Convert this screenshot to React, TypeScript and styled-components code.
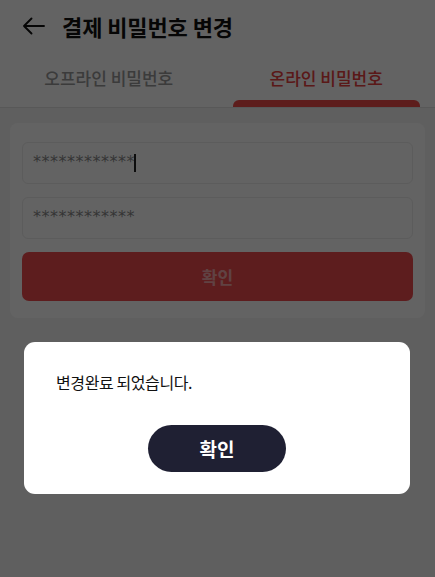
import React, {useState} from 'react'
import styled, {createGlobalStyle} from 'styled-components'

const GlobalStyle = createGlobalStyle`
  body {
    margin: 0;
    font-family: 'Noto Sans CJK KR', 'Noto Sans', sans-serif;
    background: #f4f4f4;
  }
  * {
    box-sizing: border-box;
  }
`

type TabKey = 'offline' | 'online'

const tabs: {key: TabKey; label: string}[] = [
  {key: 'offline', label: '오프라인 비밀번호'},
  {key: 'online', label: '온라인 비밀번호'},
]

const BackIcon = () => (
  <svg width="23" height="18" viewBox="0 0 23 18" fill="none">
    <path d="M22 9H2M9.5 1.5L2 9l7.5 7.5" stroke="#111" strokeWidth="1.9" strokeLinecap="round" strokeLinejoin="round" />
  </svg>
)

export default function App() {
  const [activeTab, setActiveTab] = useState<TabKey>('online')
  const [isModalShown, setIsModalShown] = useState<boolean>(true)

  return (
    <Page>
      <GlobalStyle />
      <Header>
        <BackButton>
          <BackIcon />
        </BackButton>
        <Title>결제 비밀번호 변경</Title>
      </Header>

      <Tabs>
        {tabs.map((tab) => (
          <Tab key={tab.key} active={tab.key === activeTab} onClick={() => setActiveTab(tab.key)}>
            {tab.label}
          </Tab>
        ))}
      </Tabs>

      <Content>
        <Card>
          <Field>
            ************
            <Caret />
          </Field>
          <Field>************</Field>
          <SubmitButton>확인</SubmitButton>
        </Card>
      </Content>

      {isModalShown && (
        <Overlay>
          <Modal>
            <Message>변경완료 되었습니다.</Message>
            <ConfirmButton onClick={() => setIsModalShown(false)}>확인</ConfirmButton>
          </Modal>
        </Overlay>
      )}
    </Page>
  )
}

const Page = styled.div`
  position: relative;
  min-height: 577px;
  background: #f4f4f4;
`

const Header = styled.header`
  display: flex;
  align-items: center;
  height: 50px;
  padding: 1px 20px 0 22px;
  background: #fff;
`

const BackButton = styled.div`
  display: flex;
  align-items: center;
`

const Title = styled.h1`
  margin: 0 0 0 17px;
  font-size: 22px;
  font-weight: 700;
  color: #111;
  letter-spacing: -0.1px;
`

const Tabs = styled.nav`
  display: grid;
  grid-template-columns: 1fr 1fr;
  height: 58px;
  background: #fff;
  border-bottom: 1px solid #e2e2e2;
`

const Tab = styled.div<{active: boolean}>`
  position: relative;
  display: flex;
  justify-content: center;
  padding-top: 15px;
  font-size: 17px;
  font-weight: 500;
  color: ${({active}) => (active ? '#e8403f' : '#999')};
  cursor: pointer;

  &::after {
    content: '';
    display: ${({active}) => (active ? 'block' : 'none')};
    position: absolute;
    left: 15px;
    right: 15px;
    bottom: 0;
    height: 7px;
    border-radius: 6px 6px 0 0;
    background: #ef4c4a;
  }
`

const Content = styled.main`
  padding: 15px 10px;
`

const Card = styled.section`
  display: flex;
  flex-direction: column;
  gap: 13px;
  padding: 19px 12px 17px;
  background: #fff;
  border-radius: 8px;
`

const Field = styled.div`
  display: flex;
  align-items: center;
  height: 42px;
  padding: 0 0 3px 10px;
  border: 1px solid #ececec;
  border-radius: 6px;
  font-family: 'DejaVu Sans', sans-serif;
  font-size: 16px;
  letter-spacing: 0.5px;
  color: #8a8a8a;
`

const Caret = styled.span`
  display: inline-block;
  width: 1.5px;
  height: 18px;
  margin: 3px 0 0 -1px;
  background: #222;
`

const SubmitButton = styled.button`
  height: 49px;
  border: none;
  border-radius: 7px;
  background: #ef4c4f;
  font-family: inherit;
  font-size: 17px;
  font-weight: 700;
  color: rgba(255, 255, 255, 0.55);
`

const Overlay = styled.div`
  position: fixed;
  inset: 0;
  display: flex;
  justify-content: center;
  align-items: flex-start;
  padding: 342px 25px 0 24px;
  background: rgba(0, 0, 0, 0.61);
`

const Modal = styled.div`
  display: flex;
  flex-direction: column;
  align-items: center;
  width: 100%;
  padding: 29px 32px 22px;
  background: #fff;
  border-radius: 11px;
`

const Message = styled.p`
  align-self: stretch;
  margin: 0 0 32px;
  font-size: 16px;
  line-height: 22px;
  color: #111;
  letter-spacing: -0.4px;
`

const ConfirmButton = styled.button`
  width: 138px;
  height: 47px;
  border: none;
  border-radius: 24px;
  background: #1f2033;
  font-family: inherit;
  font-size: 19px;
  font-weight: 700;
  color: #fff;
  cursor: pointer;
`
